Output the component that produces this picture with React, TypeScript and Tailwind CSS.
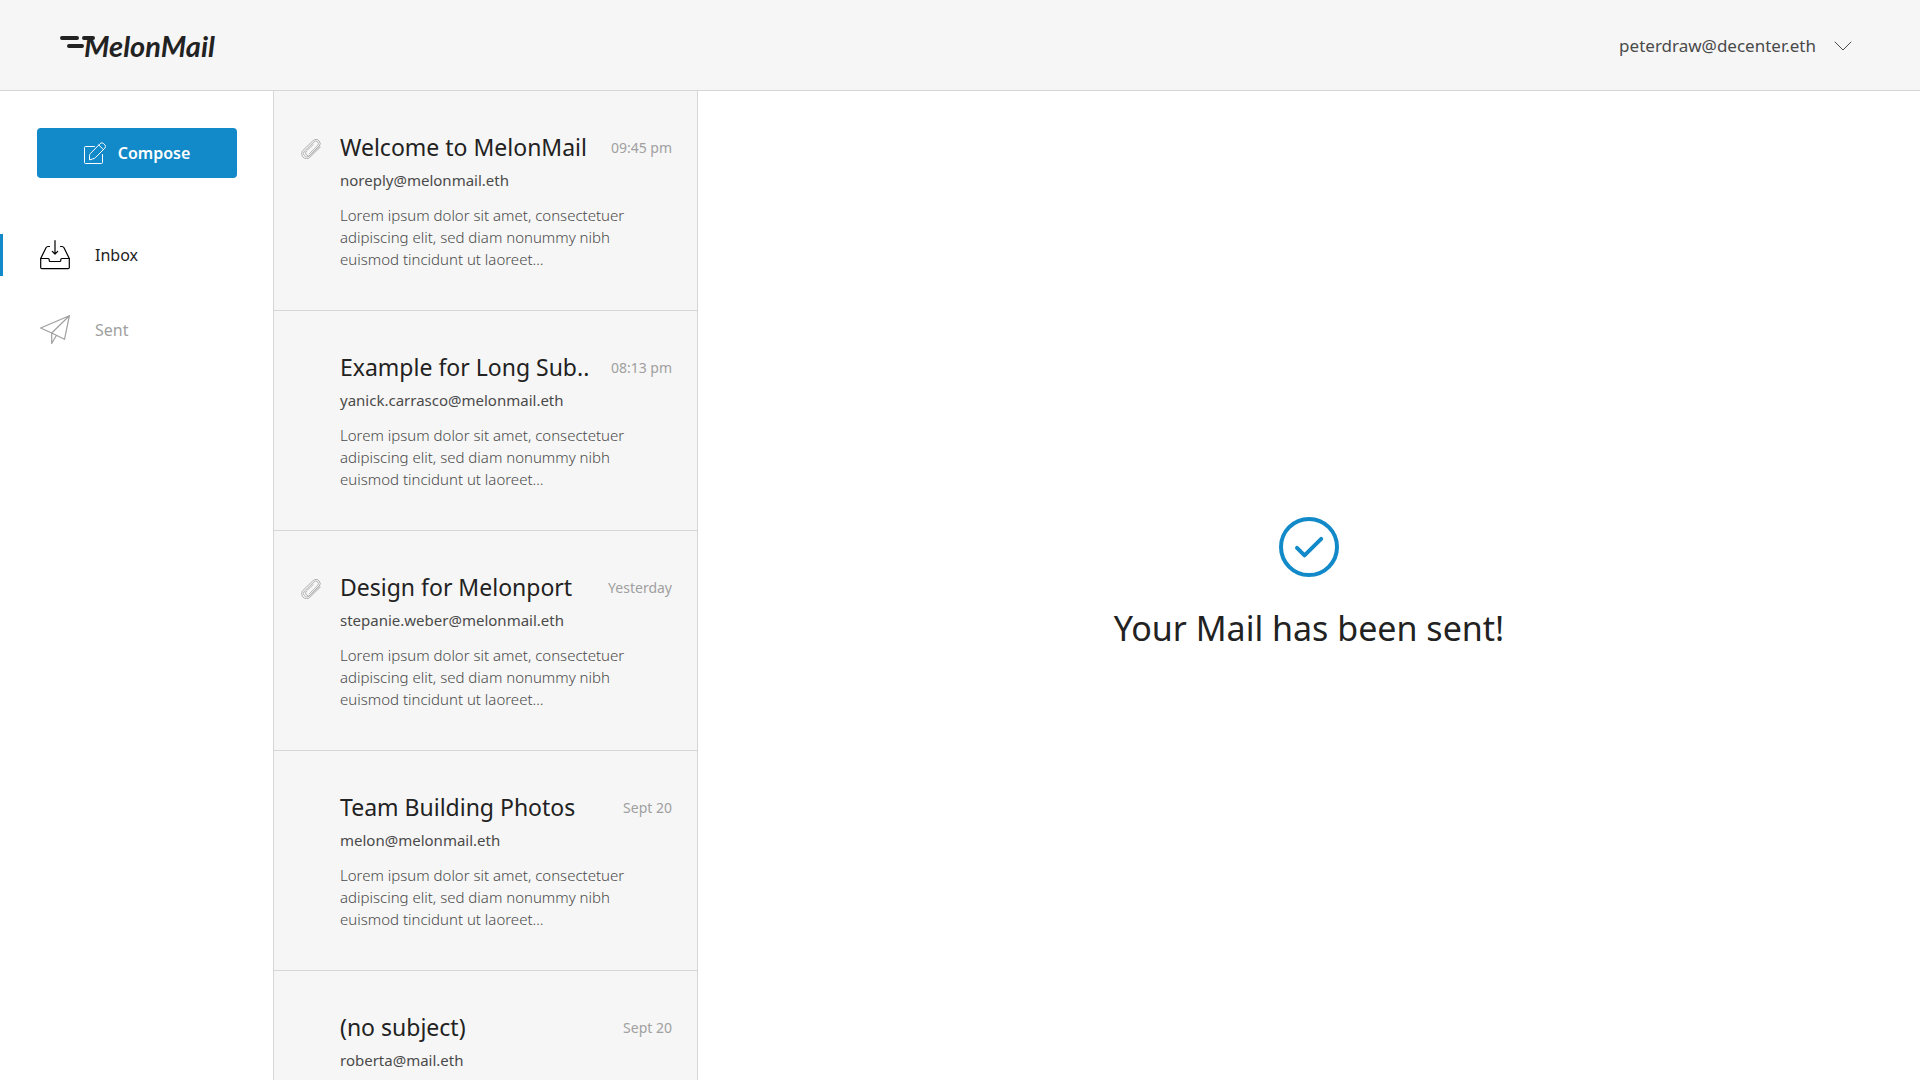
import React from "react";

type Mail = {
  subject: string;
  sender: string;
  time: string;
  attachment?: boolean;
};

const PREVIEW =
  "Lorem ipsum dolor sit amet, consectetuer adipiscing elit, sed diam nonummy nibh euismod tincidunt ut laoreet…";

const MAILS: Mail[] = [
  { subject: "Welcome to MelonMail", sender: "noreply@melonmail.eth", time: "09:45 pm", attachment: true },
  { subject: "Example for Long Sub..", sender: "yanick.carrasco@melonmail.eth", time: "08:13 pm" },
  { subject: "Design for Melonport", sender: "stepanie.weber@melonmail.eth", time: "Yesterday", attachment: true },
  { subject: "Team Building Photos", sender: "melon@melonmail.eth", time: "Sept 20" },
  { subject: "(no subject)", sender: "roberta@mail.eth", time: "Sept 20" },
];

function Logo() {
  return (
    <a href="#home" className="flex items-center text-[#222222]">
      <svg width="35" height="20" viewBox="0 0 35 20" fill="none" stroke="currentColor" strokeWidth="4" strokeLinecap="round" aria-hidden="true">
        <path d="M2 2H17M24 2H33M9 10H22" />
      </svg>
      <span className="-ml-[11px] font-['Lato',sans-serif] text-[29px] leading-8 font-bold italic">MelonMail</span>
    </a>
  );
}

function ChevronIcon() {
  return (
    <svg width="18" height="10" viewBox="0 0 18 10" fill="none" stroke="currentColor" strokeLinecap="round" strokeLinejoin="round" aria-hidden="true">
      <path d="M1 1L9 9L17 1" />
    </svg>
  );
}

function ComposeIcon() {
  return (
    <svg width="22" height="22" viewBox="0 0 22 22" fill="none" stroke="currentColor" strokeLinecap="round" strokeLinejoin="round" aria-hidden="true">
      <path d="M10.5 4.5H1.5a1 1 0 0 0-1 1V20.5a1 1 0 0 0 1 1H17.5a1 1 0 0 0 1-1V12.5" />
      <path d="M5.5 17.5V13.8Q5.5 12.4 6.6 11.3L16.2 1.6a2.4 2.4 0 0 1 3.4 0l1.2 1.2a2.4 2.4 0 0 1 0 3.4L11.4 15.7Q10.6 16.5 9.2 16.8zM14.8 3l4.6 4.6" />
    </svg>
  );
}

function InboxIcon() {
  return (
    <svg width="30" height="30" viewBox="0 0 30 30" fill="none" stroke="currentColor" strokeWidth="1.2" strokeLinecap="round" strokeLinejoin="round" aria-hidden="true">
      <path d="M.7 18.5L6 7.8Q6.700 6.500 8 6.500H9.500M20.500 6.500H22q1.300 0 2 1.300L29.300 18.500" />
      <path d="M.7 18.500H8.200q1 0 1 1v1q0 1 1 1h9.600q1 0 1-1v-1q0-1 1-1H29.300V27.500q0 1.200-1.200 1.200H1.900Q.7 28.700.7 27.500z" />
      <path d="M15 .7V13.700M12.300 11.300L15 14L17.700 11.300" />
    </svg>
  );
}

function SentIcon() {
  return (
    <svg width="30" height="30" viewBox="0 0 30 30" fill="none" stroke="currentColor" strokeWidth="1.2" strokeLinecap="round" strokeLinejoin="round" aria-hidden="true">
      <path d="M.6 13L29.400.7L24.500 24.300L11.700 18zM29.400.7L11.700 18V28.500L16.300 20.500" />
    </svg>
  );
}

function ClipIcon() {
  return (
    <svg width="20" height="20" viewBox="0 0 20 20" fill="none" stroke="#a2a2a2" strokeWidth="0.8" strokeLinecap="round" role="img" aria-label="Attachment">
      <path d="M19.500 7.800L9.100 18.200a4.900 4.900 0 0 1-7 0a4.900 4.900 0 0 1 0-7L12 1.700a4 4 0 0 1 6.100.2a4 4 0 0 1-.1 5.600L9.400 16a2.700 2.700 0 0 1-4-.1a2.700 2.700 0 0 1 .1-3.900L12.200 5.600" />
      <path d="M18.500 6.900L8.300 16.900a3.300 3.300 0 0 1-4.900-.1a3.300 3.300 0 0 1 .1-4.700L13 2.900a2.500 2.500 0 0 1 3.800.1a2.500 2.500 0 0 1 0 3.400L8.400 14.700" />
    </svg>
  );
}

function Header() {
  return (
    <header className="flex shrink-0 items-center justify-between border-b border-[#d6d6d6] bg-[#f6f6f6] pt-[29px] pr-[68px] pb-[27px] pl-[60px]">
      <Logo />
      <button type="button" className="flex items-center gap-[18px] text-[17px] leading-[34px] text-[#4a4a4a]">
        peterdraw@decenter.eth
        <ChevronIcon />
      </button>
    </header>
  );
}

function Sidebar() {
  return (
    <aside className="w-[274px] shrink-0 border-r border-[#d6d6d6] bg-white pt-[37px]">
      <div className="pr-9 pl-[37px]">
        <button type="button" className="flex h-[50px] w-full items-center justify-center gap-3 rounded bg-[#1289c8] text-base font-semibold text-white">
          <ComposeIcon />
          Compose
        </button>
      </div>
      <nav className="mt-14 flex flex-col gap-[33px] text-base">
        <a href="#inbox" aria-current="page" className="flex h-[42px] items-center gap-[25px] border-l-[3px] border-[#1289c8] pl-[37px] text-[#222222]">
          <span className="text-black"><InboxIcon /></span>
          Inbox
        </a>
        <a href="#sent" className="flex h-[42px] items-center gap-[25px] border-l-[3px] border-transparent pl-[37px] text-[#9f9f9f]">
          <SentIcon />
          Sent
        </a>
      </nav>
    </aside>
  );
}

function MailRow({ mail }: { mail: Mail }) {
  return (
    <li className="border-b border-[#d6d6d6]">
      <a href="#mail" className="flex gap-[19px] pt-[42px] pr-[25px] pb-10 pl-[27px]">
        <span className="mt-[6px] w-5 shrink-0">{mail.attachment && <ClipIcon />}</span>
        <div className="min-w-0 flex-1">
          <div className="flex justify-between">
            <h2 className="text-[23px] leading-7 whitespace-nowrap text-[#222222]">{mail.subject}</h2>
            <time className="text-sm leading-[30px] whitespace-nowrap text-[#a0a0a0]">{mail.time}</time>
          </div>
          <p className="mt-[6px] text-[15px] leading-[22px] text-[#4a4a4a]">{mail.sender}</p>
          <p className="mt-[13px] pr-7 text-[15px] leading-[22px] font-light text-[#4a4a4a]">{PREVIEW}</p>
        </div>
      </a>
    </li>
  );
}

export default function App() {
  return (
    <div className="flex h-screen flex-col overflow-hidden bg-white font-['Noto_Sans',sans-serif]">
      <Header />
      <div className="flex min-h-0 flex-1">
        <Sidebar />
        <ul className="w-[424px] shrink-0 overflow-y-auto border-r border-[#d6d6d6] bg-[#f6f6f6] [scrollbar-width:none]">
          {MAILS.map((mail) => (
            <MailRow key={mail.subject} mail={mail} />
          ))}
        </ul>
        <main className="flex flex-1 flex-col items-center justify-center">
          <svg width="60" height="60" viewBox="0 0 60 60" fill="none" stroke="#1289c8" strokeWidth="4" strokeLinecap="round" strokeLinejoin="round" aria-hidden="true">
            <circle cx="30" cy="30" r="28" />
            <path d="M18 30.800L25.500 38.300L42.200 21.800" />
          </svg>
          <h1 className="mt-[25px] text-[34px] leading-[53px] text-[#222222]">Your Mail has been sent!</h1>
        </main>
      </div>
    </div>
  );
}
